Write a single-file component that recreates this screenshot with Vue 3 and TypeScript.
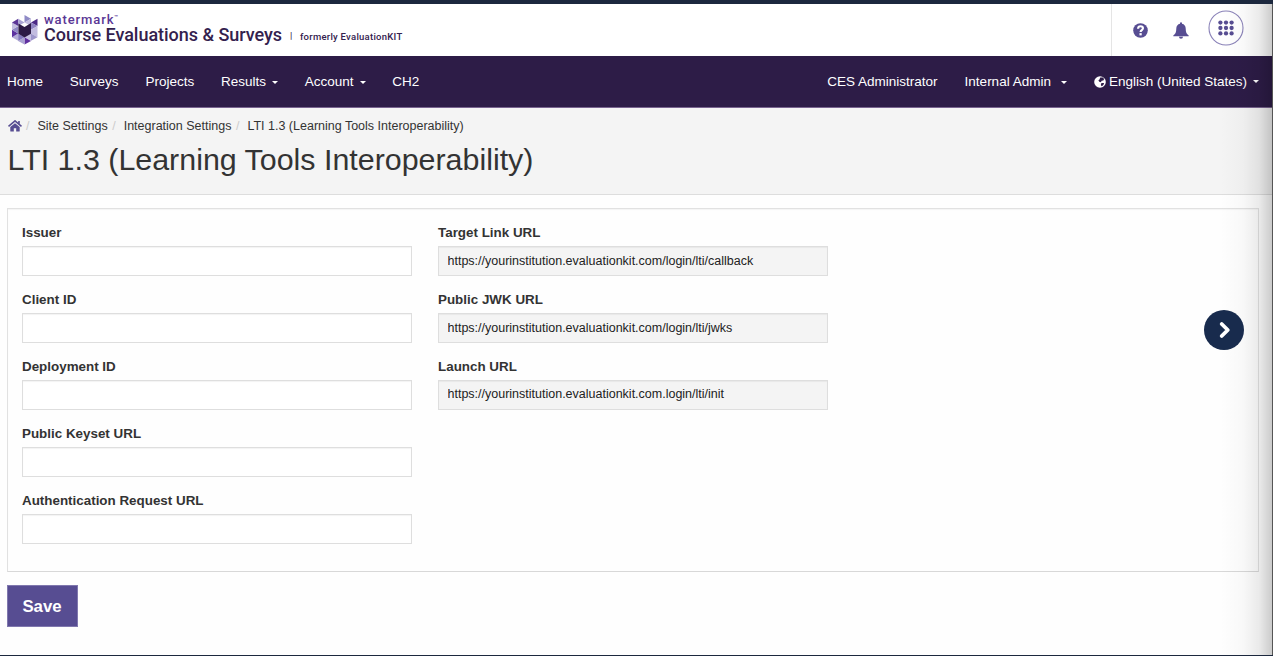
<script setup lang="ts">
interface NavItem { label: string; caret?: boolean; key: string }
interface Field { label: string; value: string; readonly: boolean }

const mainNav: NavItem[] = [
  { label: 'Home', key: 'home' },
  { label: 'Surveys', key: 'surveys' },
  { label: 'Projects', key: 'projects' },
  { label: 'Results', key: 'results', caret: true },
  { label: 'Account', key: 'account', caret: true },
  { label: 'CH2', key: 'ch2' },
]
const crumbs = ['Site Settings', 'Integration Settings', 'LTI 1.3 (Learning Tools Interoperability)']
const columns: Field[][] = [
  ['Issuer', 'Client ID', 'Deployment ID', 'Public Keyset URL', 'Authentication Request URL'].map(
    (label) => ({ label, value: '', readonly: false }),
  ),
  [
    { label: 'Target Link URL', value: 'https://yourinstitution.evaluationkit.com/login/lti/callback', readonly: true },
    { label: 'Public JWK URL', value: 'https://yourinstitution.evaluationkit.com/login/lti/jwks', readonly: true },
    { label: 'Launch URL', value: 'https://yourinstitution.evaluationkit.com.login/lti/init', readonly: true },
  ],
]
const dots = [0, 1, 2, 3, 4, 5, 6, 7, 8]
</script>

<template>
  <div class="page">
    <header class="brandbar">
      <div class="brand">
        <svg class="logo" width="26" height="30" viewBox="0 0 26 30">
          <path d="M12.500 0l6.500 3.700-6.500 3.700z" fill="#8f8bc6" />
          <path d="M12.500 7.400L19 3.700v7.400z" fill="#c3bde0" />
          <path d="M25.500 3.700v7.400L19 7.400z" fill="#4c2a86" />
          <path d="M19 7.400l6.500 3.700-6.500 3.700z" fill="#8f83c2" />
          <path d="M25.500 11.100v11.100L19 18.500v-3.700z" fill="#c2bce0" />
          <path d="M19 18.500l6.500 3.700-6.500 3.500z" fill="#9d96cb" />
          <path d="M12.500 22.200l6.500-3.700v7.200z" fill="#c6c0e2" />
          <path d="M12.500 22.200l6.500 3.700-6.500 3.700z" fill="#60309f" />
          <path d="M12.500 22.200v7.400L6.200 25.900z" fill="#a9a2d1" />
          <path d="M0 22.200l6.200-3.700v7.200z" fill="#b4add8" />
          <path d="M6.200 18.500l6.300 3.700-6.300 3.700z" fill="#8279bc" />
          <path d="M0 14.800l6.200 3.700L0 22.200z" fill="#5c32a0" />
          <path d="M0 14.800l6.200-3.700v7.400z" fill="#9089c4" />
          <path d="M0 7.400v7.400l6.200-3.700z" fill="#c2bde0" />
          <path d="M0 7.400l6.200-3.700v7.400z" fill="#5b3596" />
          <path d="M6.200 3.700l6.300 3.700-6.300 3.700z" fill="#aaa4d3" />
          <path d="M6.400 8.400l6.100 3.500L19 8v10.700l-6.500 3.700-6.100-3.700z" fill="#2c1b45" />
        </svg>
        <div class="wordmark">
          <div class="wm-top"><span>watermark</span><span class="tm">™</span></div>
          <div class="wm-row">
            <span class="product">Course Evaluations &amp; Surveys</span>
            <span class="pipe">|</span>
            <span class="formerly">formerly EvaluationKIT</span>
          </div>
        </div>
      </div>
      <div class="tools">
        <svg class="help" width="15" height="15" viewBox="0 0 16 16">
          <circle cx="8" cy="8" r="7.800" fill="#574d92" />
          <path d="M5.400 6.100C5.500 4.300 6.600 3.500 8 3.500c1.500 0 2.600.9 2.600 2.200 0 1.900-2.500 1.800-2.500 3.800" fill="none" stroke="#fff" stroke-width="2.300" />
          <rect x="6.900" y="10.800" width="2.400" height="2.400" fill="#fff" />
        </svg>
        <svg class="bell" width="16" height="17" viewBox="0 0 16 17">
          <path d="M7 1.300a1 1 0 0 1 2 0v.5c2.300.5 3.700 2.300 3.700 4.700 0 3.900.9 5.500 3 6.900v.8H.3v-.8c2.100-1.400 3-3 3-6.900 0-2.400 1.400-4.200 3.700-4.700zM6 14.700h4a2 2 0 0 1-4 0z" fill="#574d92" />
        </svg>
        <svg class="apps" width="36" height="36" viewBox="0 0 36 36">
          <circle cx="18" cy="18" r="17" fill="#fff" stroke="#8a82b8" stroke-width="1.100" />
          <circle v-for="d in dots" :key="d" :cx="12.400 + (d % 3) * 5.600" :cy="12.600 + Math.floor(d / 3) * 5.400" r="2.150" fill="#574d92" />
        </svg>
      </div>
    </header>

    <nav class="navbar">
      <div class="nav-main">
        <a v-for="item in mainNav" :key="item.key" :class="item.key">{{ item.label }}<i v-if="item.caret" class="caret"></i></a>
      </div>
      <div class="nav-user">
        <a class="ces">CES Administrator</a>
        <a class="internal">Internal Admin<i class="caret"></i></a>
        <a class="lang">
          <svg width="12" height="12" viewBox="0 0 12 12">
            <circle cx="6" cy="6" r="5.800" fill="#fff" />
            <path d="M6.200 1.500l2.600.1 1.300 1.300-.7 1.600-1.700.2-.9 1.500-1.500-.5-.9-1.500 1.100-.8z" fill="#2d1c47" />
            <path d="M7.400 7.100l2.700-.1-.7 1.900-1.700 1.300-.9-1.300z" fill="#2d1c47" />
          </svg>
          <span>English (United States)</span><i class="caret"></i>
        </a>
      </div>
    </nav>

    <section class="heading">
      <div class="crumbs">
        <svg width="14" height="12" viewBox="0 0 14 12">
          <path d="M7 3.200l4.700 3.900V11a.6.6 0 0 1-.6.600H8.200V8.300H5.800v3.300H2.900a.6.6 0 0 1-.6-.6V7.100z" fill="#574d92" />
          <path d="M.5 6.300L7 .9l6.500 5.400M11 1v3" fill="none" stroke="#574d92" stroke-width="1.600" />
        </svg>
        <template v-for="crumb in crumbs" :key="crumb"><span class="slash">/</span><span class="crumb">{{ crumb }}</span></template>
      </div>
      <h1>LTI 1.3 (Learning Tools Interoperability)</h1>
    </section>

    <main>
      <div class="panel">
        <div v-for="(column, c) in columns" :key="c" class="column">
          <label v-for="field in column" :key="field.label">
            <span>{{ field.label }}</span>
            <input type="text" :value="field.value" :readonly="field.readonly" />
          </label>
        </div>
      </div>
      <button class="save" type="button">Save</button>
    </main>

    <div class="edge-shade"></div>
    <button class="next" type="button" aria-label="Next">
      <svg width="40" height="40" viewBox="0 0 40 40">
        <path d="M17.700 14l6.100 6-6.100 6" fill="none" stroke="#fff" stroke-width="3.800" stroke-linecap="round" stroke-linejoin="round" />
      </svg>
    </button>
  </div>
</template>

<style>
body { margin: 0; overflow: hidden; }
</style>

<style scoped>
* { box-sizing: border-box; }
.page {
  position: relative; width: 1273px; height: 656px; overflow: hidden;
  border-top: 4px solid #1c283e; border-bottom: 1px solid #1c283e;
  background: #fefefe; color: #333;
  font-family: "Liberation Sans", Arial, sans-serif; font-size: 13.5px;
}
.brandbar { display: flex; justify-content: space-between; height: 52px; background: #fff; }
.brand { display: flex; padding: 10px 0 0 12px; gap: 6px; }
.logo { flex: none; margin-top: .5px; }
.wordmark { font-family: Roboto, sans-serif; color: #33214e; white-space: nowrap; }
.wm-top { display: flex; height: 11px; line-height: 11px; font-size: 13px; font-weight: 500; color: #5a3795; letter-spacing: .9px; }
.tm { font-size: 6px; line-height: 6px; letter-spacing: 0; }
.wm-row { display: flex; height: 20px; line-height: 20px; }
.product { width: 239px; font-size: 18px; font-weight: 500; letter-spacing: -.03px; }
.pipe { margin-left: 7px; width: 10px; line-height: 23px; font-size: 9px; font-weight: 500; }
.formerly { line-height: 23px; font-size: 9.5px; font-weight: 500; letter-spacing: .26px; }
.tools { display: flex; width: 162px; padding-left: 20.5px; border-left: 1px solid #e5e5e5; }
.help { margin-top: 19px; }
.bell { margin: 18px 0 0 25.5px; }
.apps { margin: 6px 0 0 19px; }
.navbar {
  display: flex; justify-content: space-between; align-items: center; height: 52px;
  padding: 0 14px 0 7px; background: #2d1c47; border-bottom: 1px solid #796490; color: #fff;
}
.nav-main, .nav-user { display: flex; gap: 27px; white-space: nowrap; }
.nav-main { gap: 26.8px; }
.caret { display: inline-block; margin-left: 6px; vertical-align: 2px; border: 3.5px solid transparent; border-top-color: #fff; border-bottom: 0; }
.nav-main .caret { margin-left: 6px; }
.internal .caret { margin-left: 10px; }
.lang { display: flex; align-items: center; gap: 3px; }
.lang .caret { margin-left: 3px; }
.heading { height: 87px; padding: 10px 7.500px 0; background: #f4f4f4; border-bottom: 1px solid #ddd; }
.crumbs { display: flex; align-items: center; height: 16px; font-size: 12.5px; white-space: nowrap; }
.crumbs svg { margin-right: 4.500px; }
.slash { width: 11.500px; color: #ccc; }
.crumb + .slash { margin-left: 4.500px; }
h1 { margin: 7px 0 0; font-size: 30.4px; line-height: 36px; font-weight: 400; white-space: nowrap; }
main { padding: 13px 14px 0 7px; }
.panel { display: flex; gap: 26px; height: 364px; padding: 15px 14px 0; border: 1px solid #e1e1e1; border-bottom-color: #d8d8d8; box-shadow: inset 0 1px 1px rgba(0,0,0,.04); }
.column { width: 390px; }
label { display: block; height: 67px; font-size: 13.4px; font-weight: 700; }
label span { display: block; height: 22px; line-height: 18px; }
input {
  display: block; width: 390px; height: 30px; padding: 0 8px 0 8.500px; border: 1px solid #dedede; border-radius: 0;
  box-shadow: inset 0 1px 1px rgba(0,0,0,.05); background: #fff; color: #222;
  font: 12.5px "Liberation Sans", Arial, sans-serif; outline: 0;
}
label:nth-child(3) input { padding-bottom: 2px; }
input[readonly] { background: #f4f4f4; }
.save {
  display: block; width: 71px; height: 42px; margin-top: 13px; padding: 2px 1px 0 0; border: 1px solid #8078ae; border-radius: 0;
  background: #574d92; color: #fff; font: 700 16.8px "Liberation Sans", Arial, sans-serif;
}
.edge-shade {
  position: absolute; inset: 0 0 0 auto; width: 53px; pointer-events: none;
  border-right: 1px solid #555;
  background: linear-gradient(to right, rgba(0,0,0,0), rgba(0,0,0,.025) 45%, rgba(0,0,0,.08) 75%, rgba(0,0,0,.2));
}
.next { position: absolute; left: 1204px; top: 306px; width: 40px; height: 40px; padding: 0; border: 0; border-radius: 50%; background: #182b4d; }
.next svg { display: block; }
</style>
